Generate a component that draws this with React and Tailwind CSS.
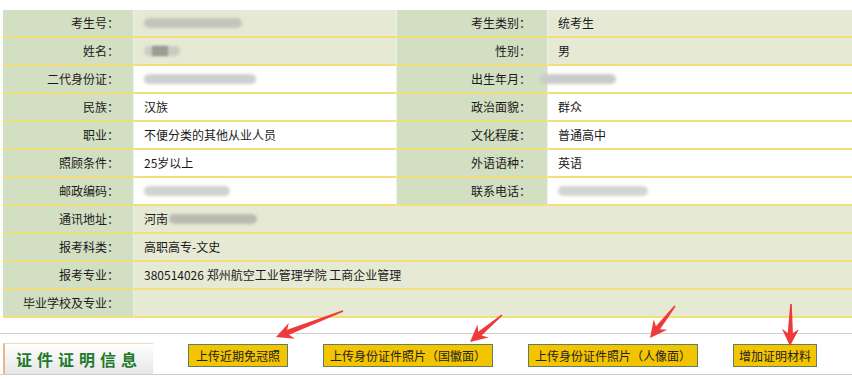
import React from "react";

const LABEL = "bg-[#d3dfc3]";
const PALE = "bg-[#e6ead4]";
const WHITE = "bg-white";

// blurred personal data (masked in the source screenshot)
function Masked({ w, dark, shade = "#c3c5bd" }) {
  return (
    <span className="relative inline-flex items-center h-[10px]" style={{ width: w }}>
      <span className="absolute inset-0 rounded-full blur-[1.5px]" style={{ background: shade }} />
      {dark && (
        <span
          className="absolute top-0 h-[10px] blur-[1px]"
          style={{ left: dark[0], width: dark[1], background: "#9a9d94" }}
        />
      )}
    </span>
  );
}

const pairRows = [
  { l: "考生号", v: <Masked w={98} shade="#c2c5b9" />, r: "考生类别", rv: "统考生", bg: PALE },
  { l: "姓名", v: <Masked w={36} dark={[8, 16]} shade="#c9ccc0" />, r: "性别", rv: "男", bg: PALE },
  { l: "二代身份证", v: <Masked w={112} shade="#cfcfd2" />, r: "出生年月", rv: <span className="-ml-[18px]"><Masked w={76} shade="#cbcbcb" /></span>, bg: WHITE },
  { l: "民族", v: "汉族", r: "政治面貌", rv: "群众", bg: WHITE },
  { l: "职业", v: "不便分类的其他从业人员", r: "文化程度", rv: "普通高中", bg: WHITE },
  { l: "照顾条件", v: "25岁以上", r: "外语语种", rv: "英语", bg: WHITE },
  { l: "邮政编码", v: <Masked w={86} shade="#d2d2d2" />, r: "联系电话", rv: <Masked w={90} shade="#d4d4d4" />, bg: WHITE },
];

const wideRows = [
  { l: "通讯地址", v: <span className="flex items-center gap-[1px]">河南<Masked w={88} shade="#b9bbb2" /></span> },
  { l: "报考科类", v: "高职高专-文史" },
  { l: "报考专业", v: "380514026 郑州航空工业管理学院 工商企业管理" },
  { l: "毕业学校及专业", v: "" },
];

const buttons = [
  { t: "上传近期免冠照", w: "w-[100px]" },
  { t: "上传身份证件照片（国徽面）", w: "w-[170px]" },
  { t: "上传身份证件照片（人像面）", w: "w-[170px]" },
  { t: "增加证明材料", w: "w-[84px]" },
];

const arrows = [
  [343, 311, 276, 337],
  [502, 315, 470, 342],
  [675, 306, 650, 338],
  [791, 304, 790, 346],
];

function arrowPoints([x1, y1, x2, y2]) {
  const len = Math.hypot(x2 - x1, y2 - y1);
  const dx = (x2 - x1) / len;
  const dy = (y2 - y1) / len;
  const nx = -dy;
  const ny = dx;
  const headLen = 17;
  const headW = 17;
  const bx = x2 - dx * headLen;
  const by = y2 - dy * headLen;
  const back = 4; // barbs swept back
  const pts = [
    [x1 + nx * 0.8, y1 + ny * 0.8],
    [bx + dx * back + nx * 2.6, by + dy * back + ny * 2.6],
    [bx + nx * headW / 2, by + ny * headW / 2],
    [x2, y2],
    [bx - nx * headW / 2, by - ny * headW / 2],
    [bx + dx * back - nx * 2.6, by + dy * back - ny * 2.6],
    [x1 - nx * 0.8, y1 - ny * 0.8],
  ];
  return pts.map((p) => p.join(",")).join(" ");
}

export default function App() {
  return (
    <div className="relative w-[852px] h-[380px] overflow-hidden bg-white text-[12px] text-[#1a1a1a] font-['SimSun','Noto_Sans_CJK_SC',sans-serif]">
      {/* info table */}
      <div className="pt-[10px] pl-[3px]">
        <div className="grid grid-cols-[131px_263px_151px_1fr] w-[852px]">
          {pairRows.map((row) => (
            <React.Fragment key={row.l}>
              <div className={`${LABEL} h-[28px] border-b-2 border-r border-b-[#f1df7c] border-r-[#eef2e6] flex items-center justify-end pr-[14px]`}>
                {row.l}：
              </div>
              <div className={`${row.bg} h-[28px] border-b-2 border-r border-b-[#f1df7c] border-r-[#eef2e6] flex items-center pl-[10px]`}>
                {row.v}
              </div>
              <div className={`${LABEL} h-[28px] border-b-2 border-r border-b-[#f1df7c] border-r-[#eef2e6] flex items-center justify-end pr-[16px]`}>
                {row.r}：
              </div>
              <div className={`${row.bg} h-[28px] border-b-2 border-b-[#f1df7c] flex items-center pl-[10px]`}>
                {row.rv}
              </div>
            </React.Fragment>
          ))}
          {wideRows.map((row) => (
            <React.Fragment key={row.l}>
              <div className={`${LABEL} h-[28px] border-b-2 border-r border-b-[#f1df7c] border-r-[#eef2e6] flex items-center justify-end pr-[14px]`}>
                {row.l}：
              </div>
              <div className={`${PALE} col-span-3 h-[28px] border-b-2 border-b-[#f1df7c] flex items-center pl-[10px]`}>
                {row.v}
              </div>
            </React.Fragment>
          ))}
        </div>
      </div>

      {/* certificate section */}
      <div className="mt-[15px] border-t border-b border-[#cfcfcf] h-[42px] pt-[9px] pl-[3px] flex items-start gap-[35px]">
        <div className="w-[150px] h-[31px] flex items-center justify-center border-l-2 border-t border-l-[#e5b98a] border-t-[#f0d9c0] bg-gradient-to-b from-white to-[#e6e6e6]">
          <span className="text-[16px] font-bold text-[#217a2b] tracking-[5px] font-['Noto_Sans_CJK_SC',sans-serif]">
            证件证明信息
          </span>
        </div>
        {buttons.map((b) => (
          <div
            key={b.t}
            className={`${b.w} h-[23px] mt-[1px] bg-[#f3c400] border border-[#5f7f63] flex items-center justify-center text-[12px] text-[#222] font-['Noto_Sans_CJK_SC',sans-serif]`}
          >
            {b.t}
          </div>
        ))}
      </div>

      {/* red annotation arrows */}
      <svg className="absolute left-0 top-0 pointer-events-none" width="852" height="380">
        {arrows.map((a, i) => (
          <polygon key={i} points={arrowPoints(a)} fill="#ee3a3a" />
        ))}
      </svg>
    </div>
  );
}
